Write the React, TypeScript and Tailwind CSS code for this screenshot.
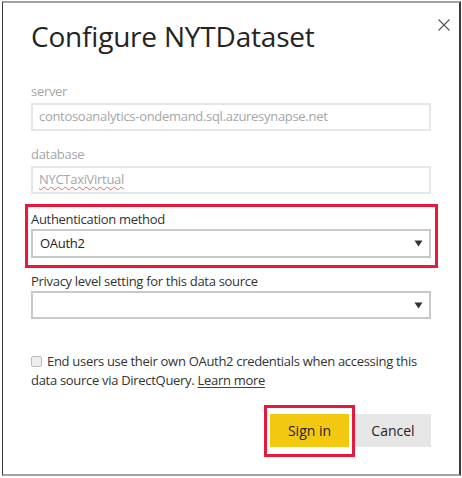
import React from "react";

const font = { fontFamily: '"Open Sans", "Noto Sans", Arial, sans-serif' };

function Caret() {
  return (
    <svg width="9" height="7" viewBox="0 0 9 7" className="block">
      <path d="M0.5 0.5 L8.5 0.5 L4.5 6.5 Z" fill="#333333" />
    </svg>
  );
}

export default function App() {
  return (
    <div className="w-[462px] h-[478px] bg-white overflow-hidden" style={font}>
      <div className="ml-[2px] mt-[1px] w-[459px] h-[475px] border-t-2 border-b-2 border-t-[#a3a3a3] border-b-[#a3a3a3] border-l border-r-2 border-l-[#3a3a3a] border-r-[#3a3a3a] bg-white pl-[28px]">
        <div className="flex items-start w-[422px]">
          <div className="pt-[15px] text-[28px] leading-[36px] text-[#252423] tracking-[-0.2px] flex-1">
            Configure NYTDataset
          </div>
          <svg width="12" height="12" viewBox="0 0 12 12" className="mt-[16px] mr-[3px]">
            <path d="M0.5 0.5 L11.5 11.5 M11.5 0.5 L0.5 11.5" stroke="#555" strokeWidth="1.1" />
          </svg>
        </div>

        <div className="w-[400px] tracking-[-0.3px]">
          <div className="mt-[28px] text-[13px] leading-[18px] text-[#a6a6a6]">server</div>
          <div className="mt-[3px] h-[28px] border-2 border-[#e6e6e6] flex items-center pl-[6px] text-[13px] text-[#a6a6a6]">
            contosoanalytics-ondemand.sql.azuresynapse.net
          </div>

          <div className="mt-[14px] text-[13px] leading-[18px] text-[#a6a6a6]">database</div>
          <div className="mt-[3px] h-[28px] border-2 border-[#e6e6e6] flex items-center pl-[6px] text-[13px] text-[#a6a6a6]">
            <span className="underline decoration-wavy decoration-[#e06666] decoration-1 underline-offset-2">NYCTaxiVirtual</span>
          </div>

          <div className="relative mt-[16px]">
            <div className="absolute left-[-6px] right-[-7px] top-[-6px] bottom-[-10px] border-[3px] border-[#e8193c] pointer-events-none" />
            <div className="text-[13px] leading-[18px] text-[#333333]">Authentication method</div>
            <div className="mt-[1px] h-[29px] border-2 border-[#c8c8c8] flex items-center justify-between pl-[7px] pr-[6px] text-[13px] text-[#252423]">
              <span>OAuth2</span>
              <Caret />
            </div>
          </div>

          <div className="mt-[14px] text-[13px] leading-[18px] text-[#333333]">Privacy level setting for this data source</div>
          <div className="mt-[1px] h-[28px] border-2 border-[#c8c8c8] flex items-center justify-end pr-[6px]">
            <Caret />
          </div>

          <div className="mt-[33px] text-[13px] leading-[19px] text-[#333333]">
            <span className="inline-block align-[-1px] w-[11px] h-[11px] rounded-[2px] border border-[#bdbdbd] bg-[#eeeeee] mr-[5px]" />
            End users use their own OAuth2 credentials when accessing this data source via DirectQuery.{" "}
            <span className="underline underline-offset-2 decoration-[#444]">Learn more</span>
          </div>

          <div className="mt-[24px] flex justify-end gap-[6px] tracking-normal">
            <div className="relative">
              <div className="absolute left-[-6px] right-[-6px] top-[-9px] bottom-[-10px] border-[3px] border-[#e8193c] pointer-events-none" />
              <button className="w-[79px] h-[33px] bg-[#f2c811] text-[14px] text-[#252423]">Sign in</button>
            </div>
            <button className="w-[76px] h-[33px] bg-[#e6e6e6] text-[14px] text-[#252423]">Cancel</button>
          </div>
        </div>
      </div>
    </div>
  );
}
